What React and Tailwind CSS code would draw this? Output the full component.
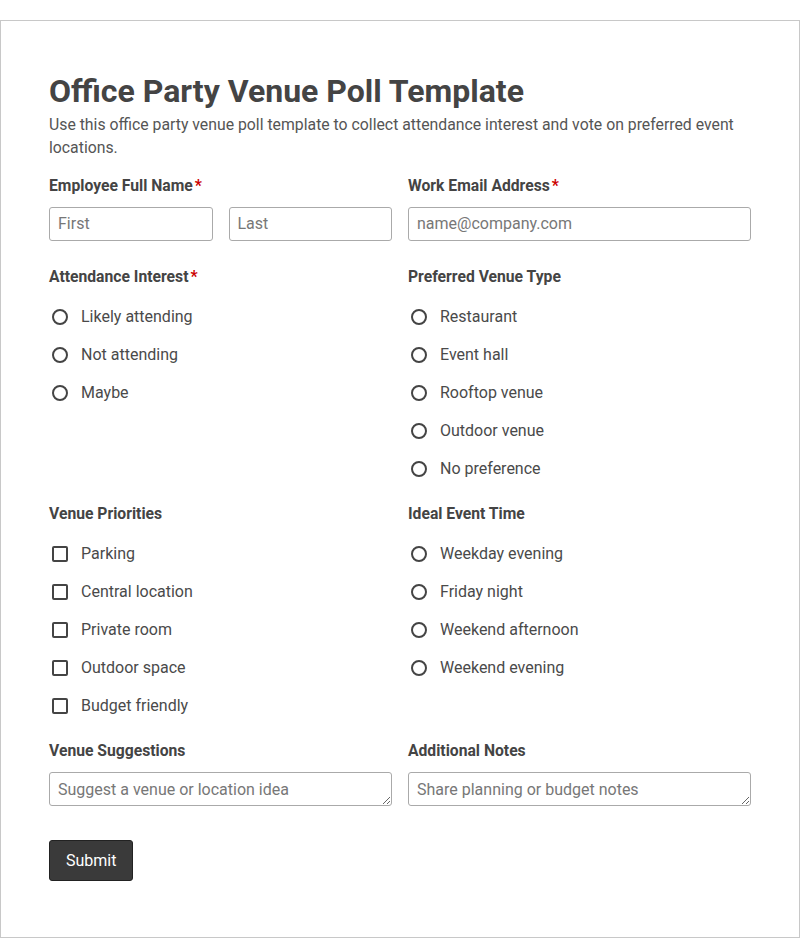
import React from "react";

const font = { fontFamily: "Roboto, 'Liberation Sans', sans-serif" };

function Label({ children, required }) {
  return (
    <div className="h-6 text-[15.7px] font-bold leading-6 text-[#444]">
      {children}
      {required && <span className="ml-[2px] text-[#c00]">*</span>}
    </div>
  );
}

function TextInput({ placeholder }) {
  return (
    <input
      type="text"
      placeholder={placeholder}
      className="h-[34px] w-full rounded-[3px] border border-[#aaa] bg-white px-[8px] pb-[2px] text-base text-[#333] placeholder:text-[#777] outline-none"
    />
  );
}

function Options({ name, items, type = "radio" }) {
  return (
    <div className="mt-[16px] flex flex-col gap-[14px]">
      {items.map((item) => (
        <label key={item} className="flex h-6 items-center text-base text-[#4a4a4a]">
          <span className="flex w-[32px] items-center pl-[3px]">
            <input
              type={type}
              name={name}
              className={
                type === "radio"
                  ? "h-[16px] w-[16px] appearance-none rounded-full border-2 border-[#444] bg-white"
                  : "h-[16px] w-[16px] appearance-none rounded-[2px] border-2 border-[#444] bg-white"
              }
            />
          </span>
          {item}
        </label>
      ))}
    </div>
  );
}

function TextArea({ placeholder }) {
  return (
    <textarea
      rows={1}
      placeholder={placeholder}
      className="mt-[9px] block h-[34px] w-full rounded-[3px] border border-[#aaa] bg-white px-[8px] pt-[6px] pb-[4px] text-base leading-[22px] text-[#333] placeholder:text-[#777] outline-none"
    />
  );
}

export default function App() {
  return (
    <div className="min-h-screen bg-white pt-[20px]" style={font}>
      <div className="border border-[#c8c8c8] px-[48px] pb-[56px] pt-[51px]">
        <h1 className="text-[32px] font-bold leading-[38px] text-[#444]">
          Office Party Venue Poll Template
        </h1>
        <p className="mt-[3px] text-[15.8px] leading-[23px] text-[#555]">
          Use this office party venue poll template to collect attendance interest and vote on preferred event
          locations.
        </p>

        <div className="mt-[15px] grid grid-cols-2 gap-x-[16px] gap-y-[21px]">
          <div className="mb-[3px]">
            <Label required>Employee Full Name</Label>
            <div className="mt-[9px] grid grid-cols-2 gap-[16px]">
              <TextInput placeholder="First" />
              <TextInput placeholder="Last" />
            </div>
          </div>
          <div className="mb-[3px]">
            <Label required>Work Email Address</Label>
            <div className="mt-[9px]">
              <TextInput placeholder="name@company.com" />
            </div>
          </div>

          <div>
            <Label required>Attendance Interest</Label>
            <Options name="attendance" items={["Likely attending", "Not attending", "Maybe"]} />
          </div>
          <div>
            <Label>Preferred Venue Type</Label>
            <Options
              name="venue"
              items={["Restaurant", "Event hall", "Rooftop venue", "Outdoor venue", "No preference"]}
            />
          </div>

          <div>
            <Label>Venue Priorities</Label>
            <Options
              name="priorities"
              type="checkbox"
              items={["Parking", "Central location", "Private room", "Outdoor space", "Budget friendly"]}
            />
          </div>
          <div>
            <Label>Ideal Event Time</Label>
            <Options
              name="time"
              items={["Weekday evening", "Friday night", "Weekend afternoon", "Weekend evening"]}
            />
          </div>

          <div>
            <Label>Venue Suggestions</Label>
            <TextArea placeholder="Suggest a venue or location idea" />
          </div>
          <div>
            <Label>Additional Notes</Label>
            <TextArea placeholder="Share planning or budget notes" />
          </div>
        </div>

        <button
          type="button"
          className="mt-[34px] block h-[41px] rounded-[3px] border border-[#222] bg-[#3a3a3a] px-[16px] text-base text-white"
        >
          Submit
        </button>
      </div>
    </div>
  );
}
